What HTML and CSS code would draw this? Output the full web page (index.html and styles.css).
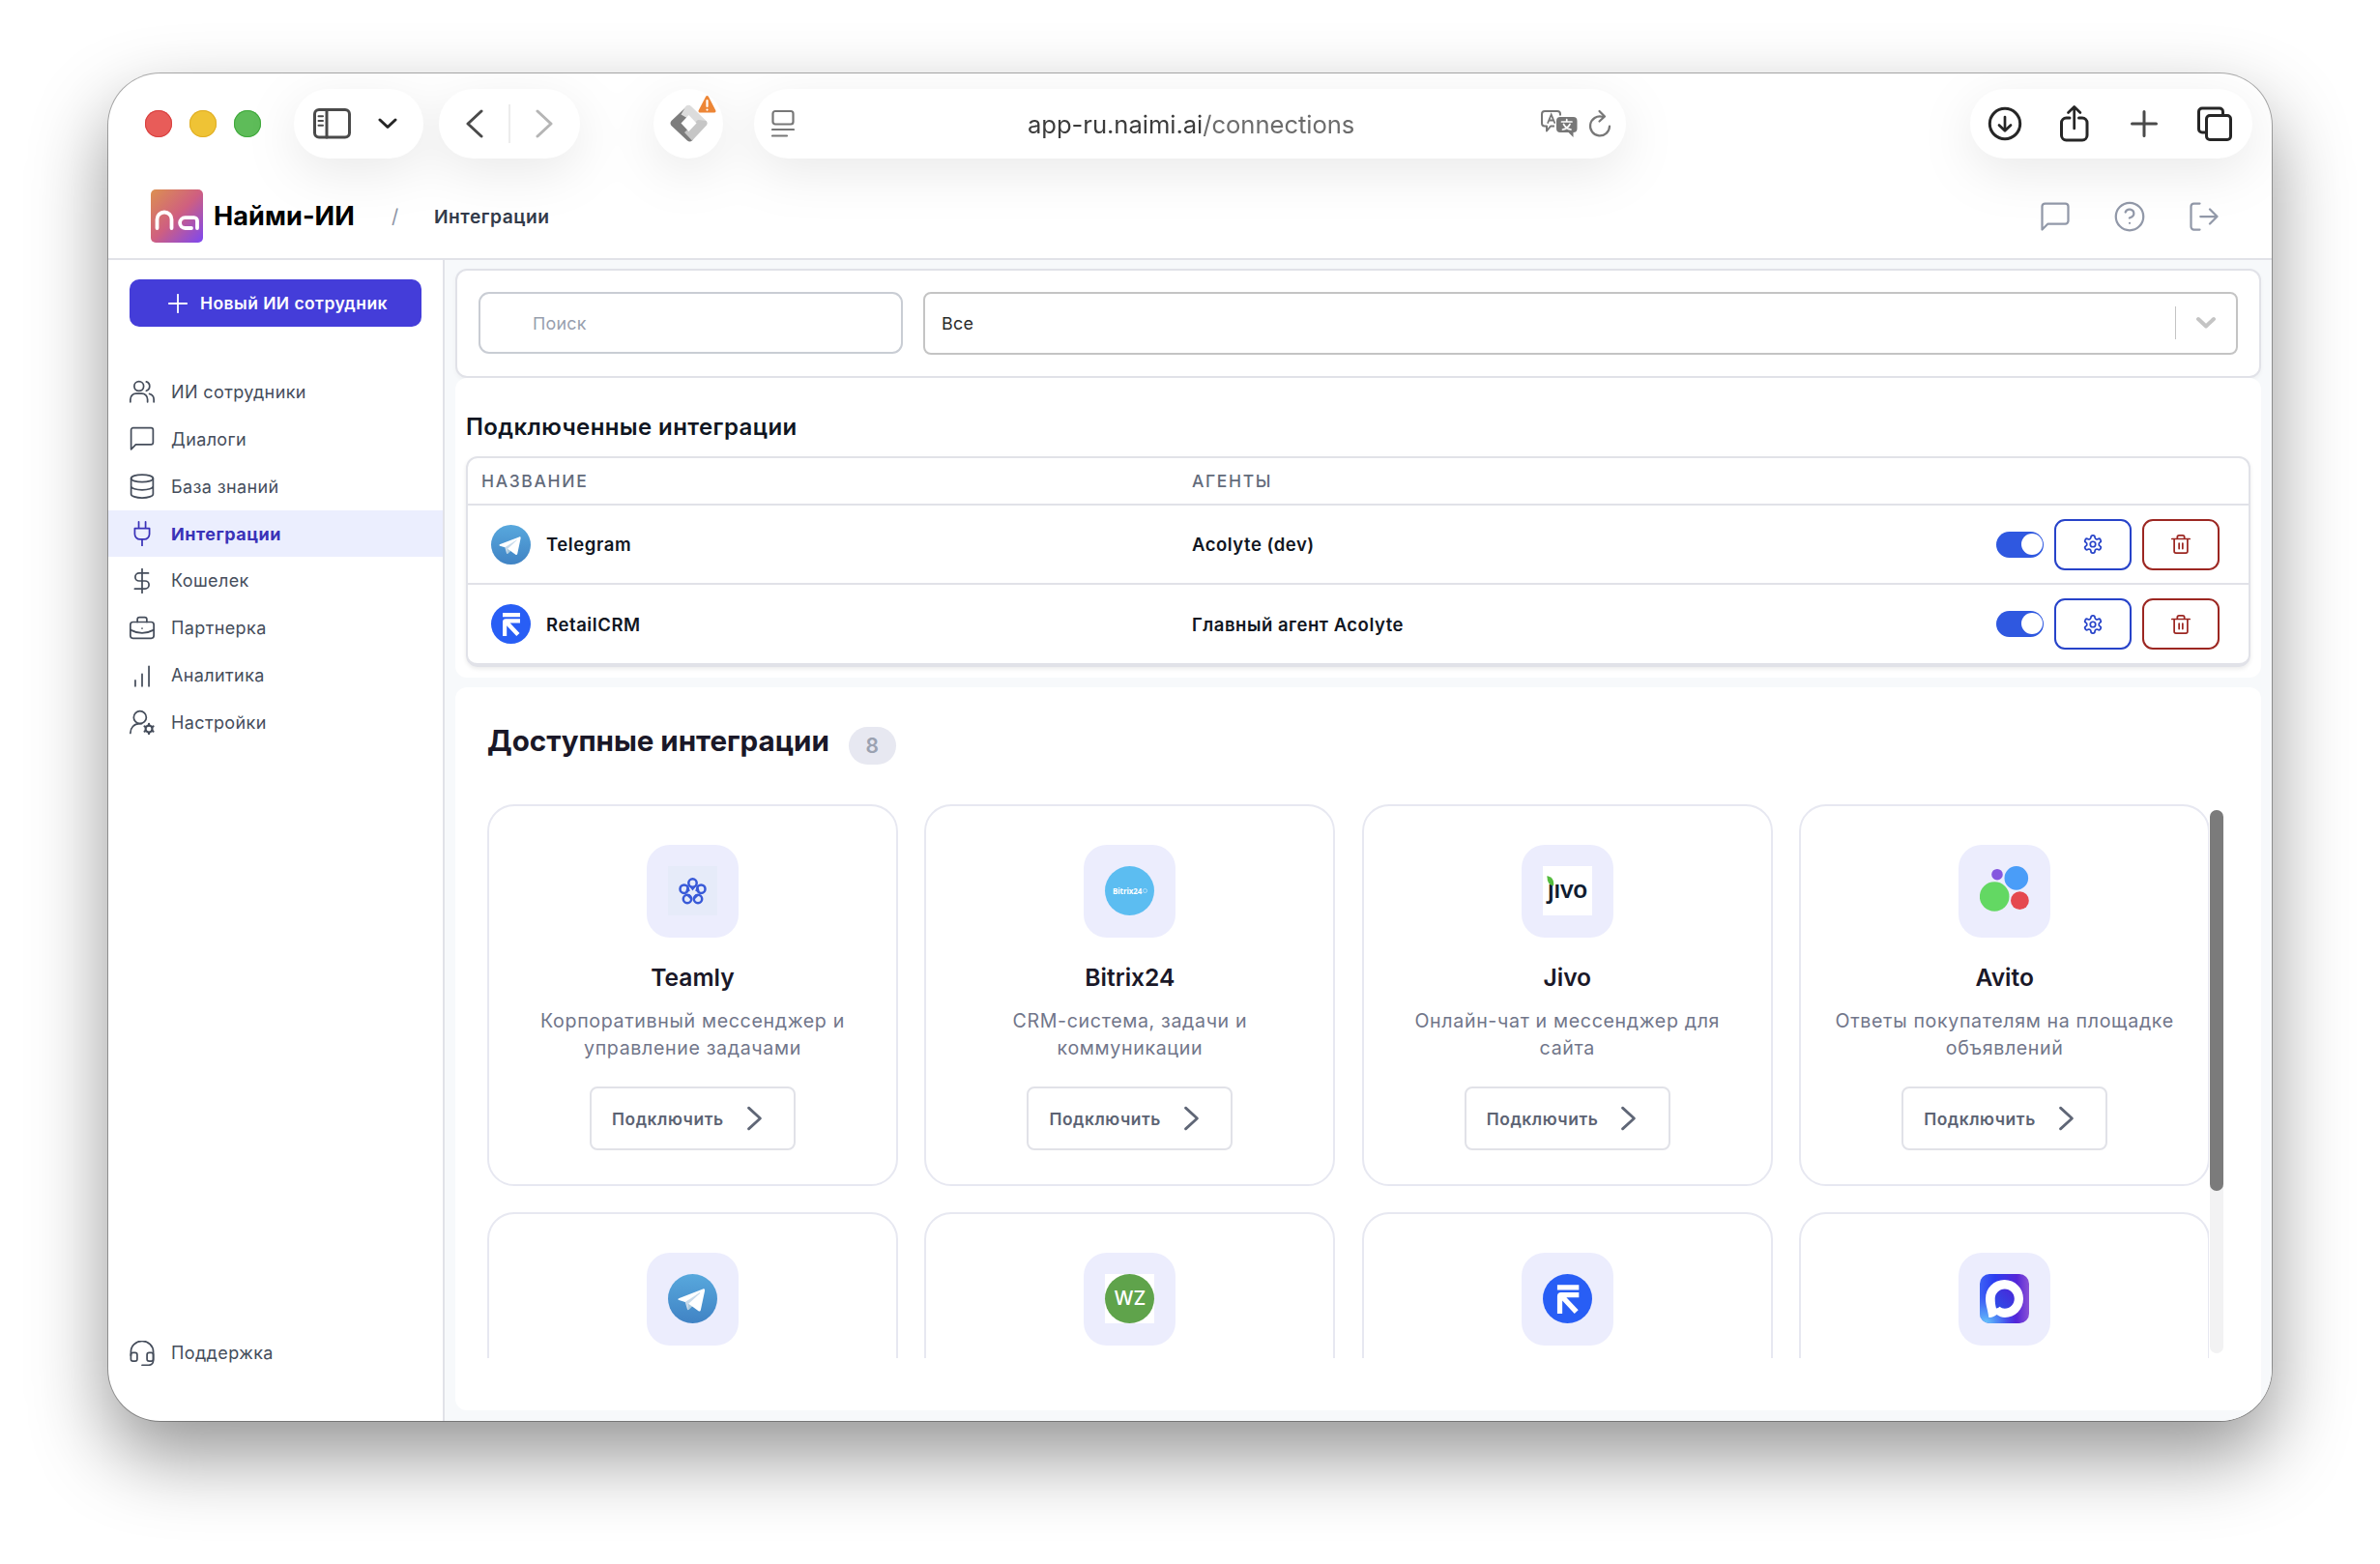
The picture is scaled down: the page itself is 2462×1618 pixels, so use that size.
FILE: index.html
```html
<!DOCTYPE html>
<html lang="ru">
<head>
<meta charset="utf-8">
<title>Найми-ИИ</title>
<link rel="stylesheet" href="styles.css">
</head>
<body>
<svg class="sprite" aria-hidden="true">
  <symbol id="i-chat" viewBox="0 0 24 24"><path d="M21 15a2 2 0 0 1-2 2H7l-4 4V5a2 2 0 0 1 2-2h14a2 2 0 0 1 2 2z"/></symbol>
  <symbol id="i-gear" viewBox="0 0 24 24"><path d="M12.2 2h-.4a2 2 0 0 0-2 2v.2a2 2 0 0 1-1 1.700l-.4.3a2 2 0 0 1-2 0l-.2-.1a2 2 0 0 0-2.700.7l-.2.4a2 2 0 0 0 .7 2.700l.2.1a2 2 0 0 1 1 1.700v.5a2 2 0 0 1-1 1.800l-.2.1a2 2 0 0 0-.7 2.700l.2.4a2 2 0 0 0 2.700.7l.2-.1a2 2 0 0 1 2 0l.4.3a2 2 0 0 1 1 1.700v.2a2 2 0 0 0 2 2h.4a2 2 0 0 0 2-2v-.2a2 2 0 0 1 1-1.700l.4-.3a2 2 0 0 1 2 0l.2.1a2 2 0 0 0 2.700-.7l.2-.4a2 2 0 0 0-.7-2.700l-.2-.1a2 2 0 0 1-1-1.800v-.5a2 2 0 0 1 1-1.700l.2-.1a2 2 0 0 0 .7-2.700l-.2-.4a2 2 0 0 0-2.700-.7l-.2.1a2 2 0 0 1-2 0l-.4-.3a2 2 0 0 1-1-1.700V4a2 2 0 0 0-2-2z"/><circle cx="12" cy="12" r="3"/></symbol>
  <symbol id="i-trash" viewBox="0 0 24 24"><path d="M2 6h20M19.500 6v14a2 2 0 0 1-2 2h-11a2 2 0 0 1-2-2V6M8 6V4a2 2 0 0 1 2-2h4a2 2 0 0 1 2 2v2M10 11v6M14 11v6"/></symbol>
  <symbol id="i-arrow" viewBox="0 0 24 24"><path d="M6 2l11 10L6 22"/></symbol>
  <symbol id="l-telegram" viewBox="0 0 240 240">
    <circle cx="120" cy="120" r="120" fill="url(#g-tg)"/>
    <path fill="#c8daea" d="M98 175c-4 0-3.300-1.500-4.700-5.300L82 132l88-50"/>
    <path fill="#a9c9dd" d="M98 175c3 0 4.300-1.400 6-3l16-15.600-20-12"/>
    <path fill="#fff" d="M100 144.400l48.400 35.700c5.500 3 9.500 1.500 10.900-5.100l19.700-92.800c2-8.100-3.100-11.700-8.400-9.300L55 117.500c-7.900 3.200-7.800 7.600-1.400 9.500l29.700 9.300 68.700-43.300c3.200-2 6.200-.9 3.800 1.300"/>
  </symbol>
  <symbol id="l-retail" viewBox="0 0 41 41">
    <circle cx="20.500" cy="20.500" r="20.500" fill="#285ef5"/>
    <path fill="#fff" d="M12 9h18v4.200H12zM12 33V18.500c0-2.300 1.200-3.300 3.200-3.300H30v4.200H19.600L29.500 30l-3.200 3L16.200 22.200V33z"/>
  </symbol>
  <defs>
    <linearGradient id="g-tg" x1="0" y1="0" x2="0" y2="1"><stop offset="0" stop-color="#58a8dd"/><stop offset="1" stop-color="#4083c4"/></linearGradient>
    <linearGradient id="g-na" x1="0" y1="0" x2="1" y2="1"><stop offset="0" stop-color="#dc9050"/><stop offset=".5" stop-color="#cf5f80"/><stop offset="1" stop-color="#7c47f2"/></linearGradient>
    <linearGradient id="g-max" x1="0" y1="0" x2="1" y2="0"><stop offset="0" stop-color="#3d62f5"/><stop offset=".3" stop-color="#2b3df0"/><stop offset=".75" stop-color="#5526d8"/><stop offset="1" stop-color="#8a52d6"/></linearGradient>
    <radialGradient id="g-max2" cx=".12" cy="1" r=".6"><stop offset="0" stop-color="#68c8fb"/><stop offset=".5" stop-color="#5aa2f8" stop-opacity=".6"/><stop offset="1" stop-color="#4a6cf6" stop-opacity="0"/></radialGradient>
    <linearGradient id="g-max3" x1="0" y1="1" x2="1" y2="0"><stop offset="0" stop-color="#2c4fe8"/><stop offset="1" stop-color="#4a25d8"/></linearGradient>
  </defs>
</svg>

<div class="window">
  <div class="toolbar">
    <div class="lights"><i class="light close"></i><i class="light minimize"></i><i class="light zoom"></i></div>
    <div class="pills">
      <div class="pill pill-side">
        <svg class="tb-ico" width="40" height="32" viewBox="0 0 40 32"><rect x="1.500" y="1.500" width="36" height="28.500" rx="4.500"/><path d="M14 1.500v28.500"/><path class="thin" d="M5.500 8.300h4.500M5.500 13h4.500M5.500 17.700h4.500"/></svg>
        <svg class="tb-ico dark" width="20" height="12" viewBox="0 0 20 12"><path d="M2 2l8 7.500L18 2"/></svg>
      </div>
      <div class="pill pill-nav">
        <svg class="tb-ico" width="20" height="30" viewBox="0 0 20 30"><path d="M17 2L3 15l14 13"/></svg>
        <i class="pill-line"></i>
        <svg class="tb-ico faded" width="20" height="30" viewBox="0 0 20 30"><path d="M3 2l14 13L3 28"/></svg>
      </div>
      <div class="pill pill-ext">
        <svg width="52" height="52" viewBox="0 0 52 52">
          <path fill="#7d7d7d" d="M20.500 13L31 23l-8.500 9.500 7.500 8-5 9q-2.500 2-5 0L3.500 34q-2-2.500 0-5z"/>
          <path fill="#dcdcdc" d="M18.500 14q3-2.500 5.500 0l15.500 15q2 2.500 0 5l-8.500-1.500L13.500 22.500z"/>
          <path fill="#c6c6c6" d="M31 28l8.500 1q2 2.500 0 5L25 49.500 17 41z"/>
          <path fill="#fff" d="M21.500 23l8 8.500-8 8.500-8-8.500z"/>
          <path fill="#ed8636" stroke="#ed8636" stroke-width="3" stroke-linejoin="round" d="M40.500 4.500L48 19H33z"/>
          <path stroke="#fff" stroke-width="2.200" stroke-linecap="round" d="M40.500 8v6M40.500 17.500v.1"/>
        </svg>
      </div>
      <div class="pill pill-url">
        <svg class="tb-ico grey" width="24" height="30" viewBox="0 0 24 30"><rect x="1.500" y="2" width="21" height="13.500" rx="2.500"/><path d="M1 21h22M1 27.500h15"/></svg>
        <span class="url">app-ru.naimi.ai<span class="path">/connections</span></span>
        <svg class="tb-tr" width="40" height="30" viewBox="0 0 40 30">
          <path fill="none" stroke="#777" stroke-width="2" stroke-linejoin="round" d="M15 17.500h-4l-4 5v-5H5a3 3 0 0 1-3-3V5a3 3 0 0 1 3-3h13a3 3 0 0 1 3 3v1.500"/>
          <path fill="none" stroke="#777" stroke-width="1.800" stroke-linecap="round" d="M8.200 14l3.500-8.500 3.500 8.500M9.500 11.500h4.500"/>
          <path fill="#777" d="M21 8h13.500a4 4 0 0 1 4 4v8a4 4 0 0 1-4 4v5l-5-5H21a4 4 0 0 1-4-4v-8a4 4 0 0 1 4-4z"/>
          <path fill="none" stroke="#fff" stroke-width="1.700" stroke-linecap="round" d="M27.700 10.500v2M22.500 13h10.500M24.500 15.500q2.500 4.500 7.500 5.500M31 15.500q-2.500 4.500-7.500 5.500"/>
        </svg>
        <svg class="tb-ico grey" width="24" height="30" viewBox="0 0 24 30"><path d="M14.500 7.700A10 10 0 1 0 22 17.500M11.500 2l5.500 5.500-5.500 5"/></svg>
      </div>
      <div class="pill pill-right">
        <svg class="tb-ico dark" width="36" height="36" viewBox="0 0 36 36"><circle cx="18" cy="18" r="15.700"/><path class="mid" d="M18 11v14M12 19.500l6 5.800 6-5.800"/></svg>
        <svg class="tb-ico dark" width="32" height="40" viewBox="1.500 0 32 40"><path d="M11.500 14H8a5 5 0 0 0-5 5v13a5 5 0 0 0 5 5h16.500a5 5 0 0 0 5-5V19a5 5 0 0 0-5-5H21"/><path class="mid" d="M16.200 25V3M10 8.500l6.200-6 6.200 6"/></svg>
        <svg class="tb-ico" width="30" height="30" viewBox="0 0 30 30"><path d="M15 2.500v25M2.500 15h25"/></svg>
        <svg class="tb-ico dark" width="38" height="38" viewBox="0 0 38 38"><path d="M10.500 28H6a3.500 3.500 0 0 1-3.500-3.500V6.500A3.500 3.500 0 0 1 6 3h18a3.500 3.500 0 0 1 3.500 3.500V10"/><rect x="10.500" y="10.500" width="25" height="25" rx="3.500"/></svg>
      </div>
    </div>
  </div>

  <header class="app-header">
    <svg class="logo" width="54" height="55" viewBox="0 0 54 55"><rect width="54" height="55" rx="5" fill="url(#g-na)"/><g fill="none" stroke="#fff" stroke-width="3.800" stroke-linecap="round"><path d="M6.500 40V31a7.500 7.500 0 0 1 15 0V40"/><path d="M48 40V32.500a3.300 3.300 0 0 0-3.300-3.300H35.500a5.400 5.400 0 0 0 0 10.800H42"/></g></svg>
    <span class="brand">Найми-ИИ</span>
    <span class="slash">/</span>
    <span class="crumb">Интеграции</span>
    <div class="head-icons">
      <svg class="hico" width="36" height="36"><use href="#i-chat"/></svg>
      <svg class="hico" width="36" height="36" viewBox="0 0 24 24"><circle cx="12" cy="12" r="9.500"/><path d="M9.100 9a3 3 0 0 1 5.800 1c0 2-3 3-3 3M12 16.500h.01"/></svg>
      <svg class="hico" width="36" height="36" viewBox="0 0 24 24"><path d="M9 21H5a2 2 0 0 1-2-2V5a2 2 0 0 1 2-2h4M16 17l5-5-5-5M21 12H9.500"/></svg>
    </div>
  </header>

  <div class="body">
    <aside class="sidebar">
      <button class="new-btn"><svg width="20" height="20" viewBox="0 0 20 20"><path d="M10 .8v18.400M.8 10h18.400"/></svg><span>Новый ИИ сотрудник</span></button>
      <nav class="nav">
        <a class="item"><svg viewBox="0 0 24 24"><circle cx="9" cy="7" r="4.500"/><path d="M.8 22v-2.500a5.500 5.500 0 0 1 5.500-5.500h5.400a5.500 5.500 0 0 1 5.500 5.500V22M16 2.700a4.500 4.500 0 0 1 0 8.600M19 14.300a5.500 5.500 0 0 1 4.200 5.200V22"/></svg><span>ИИ сотрудники</span></a>
        <a class="item"><svg viewBox="0 0 24 24"><path d="M22.500 15.500a2 2 0 0 1-2 2H6l-4.500 4.500V3.500a2 2 0 0 1 2-2h17a2 2 0 0 1 2 2z"/></svg><span>Диалоги</span></a>
        <a class="item"><svg viewBox="0 0 24 24"><ellipse cx="12" cy="4.500" rx="10.500" ry="3.500"/><path d="M1.500 4.500v15c0 2 4.700 3.600 10.500 3.600s10.500-1.600 10.500-3.600v-15M1.500 12c0 2 4.700 3.500 10.500 3.500S22.500 14 22.500 12"/></svg><span>База знаний</span></a>
        <a class="item active"><svg viewBox="0 0 24 24"><path d="M12 23.500v-6M8.800 7V.8M15.300 7V.8M5 7h14v5.500a5 5 0 0 1-5 5h-4a5 5 0 0 1-5-5z"/></svg><span>Интеграции</span></a>
        <a class="item"><svg viewBox="0 0 24 24"><path d="M12 .5v23M18 4.500H9.200a3.700 3.700 0 0 0 0 7.500h5.600a3.700 3.700 0 0 1 0 7.500H5"/></svg><span>Кошелек</span></a>
        <a class="item"><svg viewBox="0 0 24 24"><rect x=".8" y="6" width="22.400" height="15.500" rx="2.500"/><path d="M7.500 6V3.500a2 2 0 0 1 2-2h5a2 2 0 0 1 2 2V6M12 12v.1M.8 13.500q11.200 6 22.400 0"/></svg><span>Партнерка</span></a>
        <a class="item"><svg viewBox="0 0 24 24"><path d="M5.500 22v-5.500M12 22V10.500M18.500 22V3"/></svg><span>Аналитика</span></a>
        <a class="item"><svg viewBox="0 0 24 24"><circle cx="10" cy="7.500" r="6"/><path d="M.8 22.500c0-5 3.500-9 8.700-9h2"/><circle cx="18.500" cy="18.500" r="3.200" stroke-width="2"/><path d="M18.500 13.800v1M18.500 22.200v1M22.600 16.100l-.9.600M15.300 20.300l-.9.600M14.400 16.100l.9.600M21.700 20.300l.9.600" stroke-width="2"/></svg><span>Настройки</span></a>
      </nav>
      <a class="item support"><svg viewBox="0 0 24 24"><path d="M1.300 14V10.500a10.700 10.200 0 0 1 21.400 0V19a4.300 4.300 0 0 1-4.300 4.300H12"/><rect x="1.300" y="11.500" width="6" height="8" rx="2"/><rect x="16.700" y="11.500" width="6" height="8" rx="2"/></svg><span>Поддержка</span></a>
    </aside>

    <main class="main">
      <section class="filter">
        <div class="search">Поиск</div>
        <div class="select">Все<i class="select-line"></i><svg width="24" height="16" viewBox="0 0 24 16"><path d="M4 4l8 7.500L20 4"/></svg></div>
      </section>

      <section class="connected">
        <h2>Подключенные интеграции</h2>
        <div class="table">
          <div class="row head"><div class="c-name">НАЗВАНИЕ</div><div class="c-agent">АГЕНТЫ</div></div>
          <div class="row">
            <div class="c-name"><svg width="41" height="41"><use href="#l-telegram"/></svg>Telegram</div>
            <div class="c-agent">Acolyte (dev)</div>
            <div class="c-act"><i class="toggle"></i><button class="act edit"><svg><use href="#i-gear"/></svg></button><button class="act remove"><svg><use href="#i-trash"/></svg></button></div>
          </div>
          <div class="row">
            <div class="c-name"><svg width="41" height="41"><use href="#l-retail"/></svg>RetailCRM</div>
            <div class="c-agent">Главный агент Acolyte</div>
            <div class="c-act"><i class="toggle"></i><button class="act edit"><svg><use href="#i-gear"/></svg></button><button class="act remove"><svg><use href="#i-trash"/></svg></button></div>
          </div>
        </div>
      </section>

      <section class="available">
        <div class="av-head"><h1>Доступные интеграции</h1><span class="count">8</span></div>
        <div class="scroller">
          <div class="cards">
            <article class="card">
              <div class="tile"><svg width="51" height="51" viewBox="0 0 51 51"><rect width="51" height="51" fill="#e6ebf9"/><g fill="none" stroke="#3859d8" stroke-width="2.500"><circle cx="25.500" cy="17.500" r="4.200"/><circle cx="34.300" cy="23.700" r="4.200"/><circle cx="31" cy="34" r="4.200"/><circle cx="20" cy="34" r="4.200"/><circle cx="16.700" cy="23.700" r="4.200"/></g><path fill="#3859d8" d="M22.500 21.500h6l-3 4zM31 20.500l2 6.500-5-1.500zM33.500 28.800l-5.500.8-.5 5zM17.500 28.800l5.500.8.500 5zM20 20.500l-2 6.500 5-1.500z"/></svg></div>
              <h3>Teamly</h3>
              <p>Корпоративный мессенджер и<br>управление задачами</p>
              <button class="connect">Подключить<svg><use href="#i-arrow"/></svg></button>
            </article>
            <article class="card">
              <div class="tile"><div class="bitrix">Bitrix24<i></i></div></div>
              <h3>Bitrix24</h3>
              <p>CRM-система, задачи и<br>коммуникации</p>
              <button class="connect">Подключить<svg><use href="#i-arrow"/></svg></button>
            </article>
            <article class="card">
              <div class="tile"><div class="jivo"><svg width="8" height="11" viewBox="0 0 8 11"><path fill="#55bb3e" d="M.5 0Q8.500 2 7 10.500 0 9 .5 0z"/></svg><span>ȷıvo</span></div></div>
              <h3>Jivo</h3>
              <p>Онлайн-чат и мессенджер для<br>сайта</p>
              <button class="connect">Подключить<svg><use href="#i-arrow"/></svg></button>
            </article>
            <article class="card">
              <div class="tile"><svg width="51" height="51" viewBox="0 0 51 51"><circle cx="18" cy="8.700" r="5.800" fill="#8557df"/><circle cx="37.800" cy="12.400" r="12.300" fill="#4a9df8"/><circle cx="15.200" cy="31.500" r="15.300" fill="#63d863"/><circle cx="41.400" cy="35.700" r="9.400" fill="#e5484f"/></svg></div>
              <h3>Avito</h3>
              <p>Ответы покупателям на площадке<br>объявлений</p>
              <button class="connect">Подключить<svg><use href="#i-arrow"/></svg></button>
            </article>
            <article class="card"><div class="tile"><svg width="51" height="51"><use href="#l-telegram"/></svg></div></article>
            <article class="card"><div class="tile"><div class="wz"><span>WZ</span></div></div></article>
            <article class="card"><div class="tile"><svg width="51" height="51"><use href="#l-retail"/></svg></div></article>
            <article class="card"><div class="tile"><svg width="51" height="51" viewBox="0 0 51 51"><rect width="51" height="51" rx="10" fill="url(#g-max)"/><rect width="51" height="51" rx="10" fill="url(#g-max2)"/><path fill="#fff" d="M25.500 6C36.500 6 45 14.500 45 25.500S36.500 45 26 45c-3.500 0-5.500-1-8.500-3-1.500 1.500-4.500 3-7.500 3C9 45 9 44 9 43 8 36 6 32 6 25.500 6 14.500 14.500 6 25.500 6z"/><path fill="url(#g-max3)" d="M25.800 15.500c5.600 0 10 4.500 10 10s-4.400 10.200-10 10.200c-2.300 0-3.500-.6-5.300-1.900-1 1-2.500 1.900-3.500 1.700-.8-3-1.300-6-1.300-10 0-5.500 4.500-10 10.100-10z"/></svg></div></article>
          </div>
          <div class="track"><i class="thumb"></i></div>
        </div>
      </section>
    </main>
  </div>
</div>
</body>
</html>
```
FILE: styles.css
```css
* { box-sizing: border-box; margin: 0; padding: 0; }
html, body { height: 100%; }
body { background: #fff; padding: 76px 112px; font-family: Inter, "Liberation Sans", sans-serif; color: #101622; overflow: hidden; }
button { font: inherit; letter-spacing: inherit; background: none; border: 0; }
i { display: block; }
.sprite { position: absolute; width: 0; height: 0; }

.window { width: 2238px; height: 1394px; border-radius: 54px; background: #fff; overflow: hidden; display: flex; flex-direction: column; box-shadow: 0 0 0 1px rgba(0,0,0,.3), 0 36px 80px rgba(0,0,0,.42); }

/* Browser toolbar */
.toolbar { flex: 0 0 104px; height: 104px; display: flex; align-items: center; padding-left: 38px; }
.lights { display: flex; gap: 18px; width: 154px; }
.light { width: 28px; height: 28px; border-radius: 50%; }
.close { background: #e85c59; box-shadow: inset 0 0 0 1px #d8403f; }
.minimize { background: #efc335; box-shadow: inset 0 0 0 1px #e0ae25; }
.zoom { background: #5ebc59; box-shadow: inset 0 0 0 1px #3fa93b; }
.pills { display: flex; align-items: center; filter: drop-shadow(0 14px 26px rgba(0,0,0,.085)); }
.pill { height: 72px; border-radius: 36px; background: #fff; display: flex; align-items: center; }
.pill svg { flex: none; }
.pill-side { width: 134px; margin-right: 16px; padding: 0 27px 0 20px; justify-content: space-between; }
.pill-nav { width: 146px; margin-right: 76px; padding: 0 27px; justify-content: space-between; }
.pill-line { width: 2px; height: 40px; background: #ececec; }
.pill-ext { width: 72px; margin-right: 32px; padding: 0 0 12px 15px; }
.pill-url { width: 902px; margin-right: 356px; padding: 0 15px 0 18px; }
.pill-right { width: 292px; padding: 0 20px 0 18px; justify-content: space-between; }
.tb-ico { fill: none; stroke: #4a4a4a; stroke-width: 3; stroke-linecap: round; stroke-linejoin: round; }
.tb-ico .thin { stroke-width: 2; }
.tb-ico .mid { stroke-width: 2.7; }
.tb-ico.dark { stroke: #262626; }
.tb-ico.faded { stroke: #b5b5b5; }
.tb-ico.grey { stroke: #777; stroke-width: 2.2; }
.tb-tr { margin-right: 10px; }
.url { flex: 1; padding-left: 241px; font-size: 25.6px; letter-spacing: -.04px; color: #3c3c3c; white-space: nowrap; }
.url .path { color: #6c6c6c; }

/* App header */
.app-header { flex: 0 0 89px; height: 89px; display: flex; align-items: center; padding: 0 44px; border-bottom: 2px solid #e1e2e8; white-space: nowrap; }
.brand { margin-left: 11px; width: 184px; font-size: 27px; font-weight: 650; letter-spacing: .1px; color: #000; }
.slash { width: 44px; font-size: 20px; color: #8d94a5; }
.crumb { font-size: 19.2px; font-weight: 560; letter-spacing: .5px; color: #333b4a; }
.head-icons { margin-left: auto; display: flex; gap: 41px; padding-right: 8px; }
.hico { fill: none; stroke: #9299a9; stroke-width: 1.5; stroke-linecap: round; stroke-linejoin: round; }

.body { flex: 1; display: flex; min-height: 0; }

/* Sidebar */
.sidebar { width: 348px; border-right: 2px solid #e1e2e8; display: flex; flex-direction: column; padding: 20px 0 46px; }
.new-btn { margin: 0 22px; height: 49px; flex: none; border-radius: 10px; background: #443dd9; color: #fff; display: flex; align-items: center; padding-left: 40px; gap: 13px; font-size: 17.5px; font-weight: 600; letter-spacing: .43px; white-space: nowrap; }
.new-btn svg { stroke: #fff; stroke-width: 1.8; stroke-linecap: round; }
.nav { margin-top: 43px; }
.item { display: flex; align-items: center; height: 48.86px; padding-left: 22px; gap: 17px; font-size: 18px; letter-spacing: .38px; color: #454d5b; white-space: nowrap; }
.item svg { width: 26px; height: 26px; fill: none; stroke: #454d5b; stroke-width: 1.6; stroke-linecap: round; stroke-linejoin: round; }
.item.active { background: #ebeefe; color: #3a32b8; font-weight: 650; letter-spacing: .5px; }
.item.active svg { stroke: #3a32b8; }
.support { margin-top: auto; }

/* Main */
.main { flex: 1; background: #f7f9fb; padding: 9px 11px; display: flex; flex-direction: column; }
.main > section { background: #fff; border-radius: 12px; width: 1868px; flex: none; }
.filter { height: 113px; border: 2px solid #e1e2e8; padding: 22px; display: flex; gap: 21px; box-shadow: 0 2px 4px rgba(0,0,0,.04); }
.search { width: 439px; height: 64px; border: 2px solid #c9cdd4; border-radius: 11px; display: flex; align-items: center; padding-left: 54px; font-size: 17.9px; letter-spacing: .25px; color: #989fae; }
.select { width: 1360px; height: 65px; border: 2px solid #c4c4c4; border-radius: 8px; display: flex; align-items: center; padding: 0 19px 1px 17px; font-size: 17.9px; letter-spacing: .3px; color: #2c2c2c; }
.select-line { width: 1px; height: 34px; background: #c4c4c4; margin: 0 19px 0 auto; }
.select svg { fill: none; stroke: #c4c4c4; stroke-width: 4; stroke-linecap: round; stroke-linejoin: round; }

.connected { height: 310px; padding: 0 11px; }
.connected h2 { height: 81px; padding-top: 35px; font-size: 24px; line-height: 32px; font-weight: 560; letter-spacing: .4px; }
.table { border: 2px solid #e1e2e8; border-bottom-width: 4px; border-radius: 12px; height: 218px; box-shadow: 0 2px 4px rgba(0,0,0,.08); }
.row { display: flex; align-items: center; height: 82px; border-bottom: 2px solid #e1e2e8; white-space: nowrap; }
.row:last-child { border-bottom: 0; height: 81px; }
.row.head { height: 49px; color: #636b7b; }
.c-name { width: 749px; padding-left: 24px; display: flex; align-items: center; gap: 16px; font-size: 18.5px; font-weight: 560; letter-spacing: .58px; }
.c-agent { font-size: 18.5px; font-weight: 560; letter-spacing: .52px; }
.head .c-name { padding-left: 14px; }
.head .c-name, .head .c-agent { font-size: 17.5px; font-weight: 540; letter-spacing: 1.65px; }
.c-act { margin-left: auto; padding-right: 30px; display: flex; align-items: center; }
.toggle { width: 49px; height: 27px; border-radius: 14px; background: #2f58e0; padding: 2px 3px 0 26px; margin-right: 11px; }
.toggle::after { content: ""; display: block; width: 22px; height: 22px; border-radius: 50%; background: #fff; }
.act { width: 80px; height: 53px; border-radius: 11px; border: 2px solid; display: flex; align-items: center; justify-content: center; }
.act svg { width: 22px; height: 22px; fill: none; stroke: currentColor; stroke-width: 1.9; stroke-linecap: round; stroke-linejoin: round; }
.act.edit { color: #2743c9; margin-right: 11px; }
.act.remove { color: #9c2722; }

.available { margin-top: 10px; height: 748px; padding: 35px 33px 0; }
.av-head { height: 86px; display: flex; gap: 20px; white-space: nowrap; }
.av-head h1 { font-size: 29.6px; line-height: 40px; font-weight: 700; letter-spacing: -.04px; color: #1a1828; }
.count { margin-top: 6px; width: 49px; height: 39px; border-radius: 20px; background: #e7e8f1; color: #9ba2b1; font-size: 21px; line-height: 39px; font-weight: 600; text-align: center; }
.scroller { display: flex; height: 573px; overflow: hidden; }
.cards { width: 1781px; flex: none; overflow: hidden; display: grid; grid-template-columns: repeat(4, 425px); grid-auto-rows: 395px; column-gap: 27.4px; row-gap: 27px; }
.card { border: 2px solid #e7e8f1; border-radius: 28px; padding-top: 40px; display: flex; flex-direction: column; align-items: center; text-align: center; white-space: nowrap; }
.tile { width: 95px; height: 96px; border-radius: 24px; background: #ecedfd; display: flex; align-items: center; justify-content: center; flex: none; padding-bottom: 2px; }
.card h3 { margin-top: 24px; font-size: 24.6px; line-height: 34px; font-weight: 600; color: #1a1828; }
.card p { margin-top: 14px; font-size: 19.6px; letter-spacing: .65px; line-height: 28px; color: #71768a; }
.connect { margin-top: 26px; width: 213px; height: 66px; border: 2px solid #e1e2e8; border-radius: 8px; display: flex; align-items: center; padding-left: 21px; color: #5c6373; font-size: 17.4px; font-weight: 560; letter-spacing: .55px; }
.connect svg { width: 26px; height: 26px; margin-left: 19px; fill: none; stroke: #5f6676; stroke-width: 2.6; stroke-linecap: round; stroke-linejoin: round; }
.bitrix { width: 51px; height: 51px; border-radius: 50%; background: #5cbdf1; color: #fff; font: 700 8px/51px "Open Sans", sans-serif; padding-left: 7.5px; display: flex; align-items: center; gap: .5px; letter-spacing: -.1px; }
.bitrix i { width: 5px; height: 5px; border: 1px solid #b5e0f9; border-radius: 50%; }
.jivo { width: 51px; height: 51px; background: #fff; position: relative; color: #101c30; font: 600 25px/51px "Noto Sans", sans-serif; }
.jivo svg { position: absolute; left: 4px; top: 10px; }
.jivo span { display: block; text-align: left; padding-left: 5px; line-height: 47px; letter-spacing: -.5px; }
.wz { width: 51px; height: 51px; background: #fff; }
.wz span { display: block; height: 51px; border-radius: 50%; background: #5fa34b; color: #fff; font: 500 20px/51px Inter, sans-serif; }
.track { width: 14px; height: 562px; margin: 6px 0 0 1px; border-radius: 7px; background: #f2f2f3; }
.thumb { height: 394px; border-radius: 7px; background: #7b7b7b; }
```
